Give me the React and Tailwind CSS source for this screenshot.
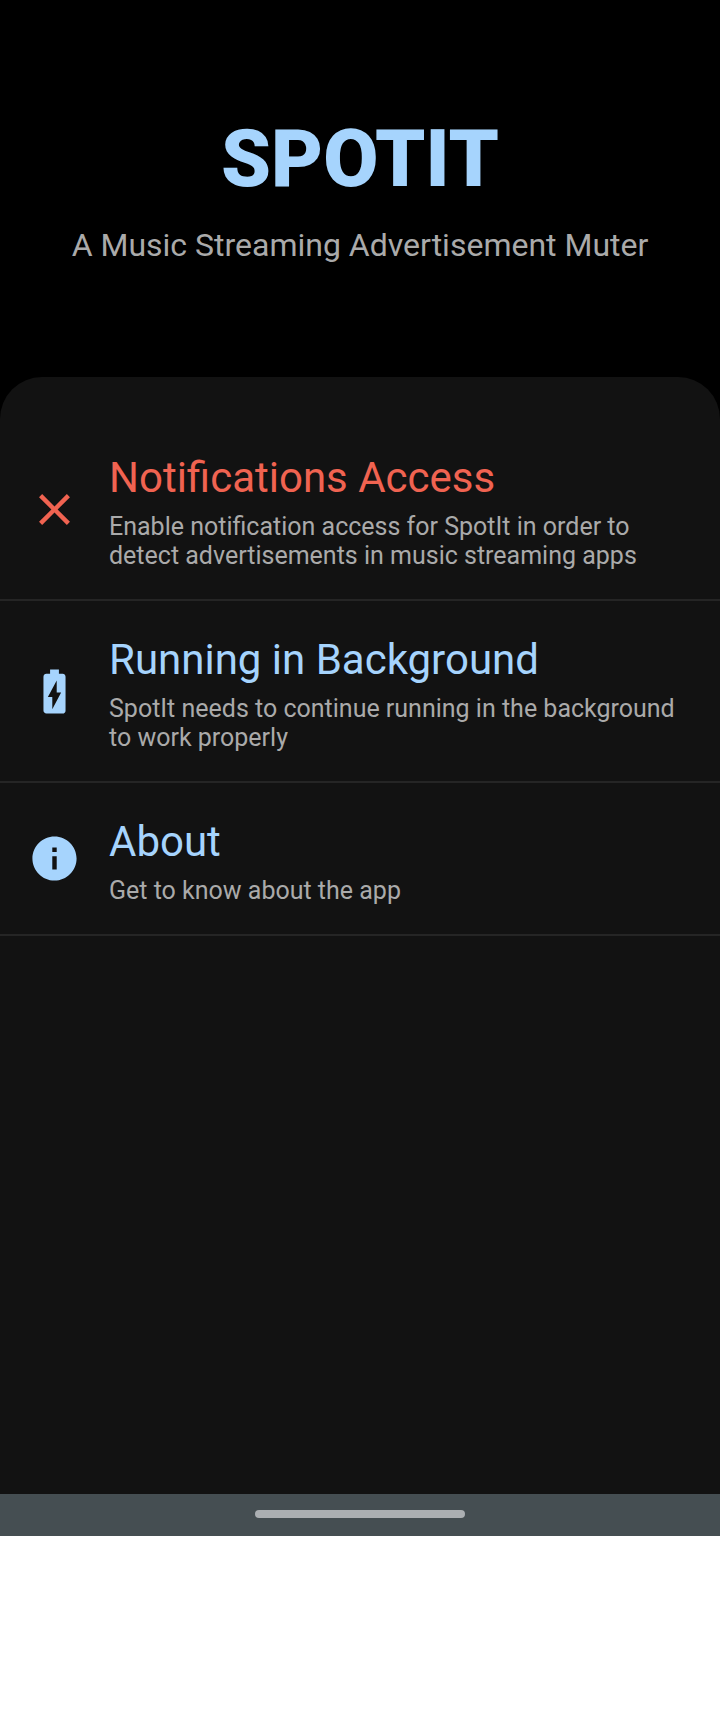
const iconBox = "size-[53px] shrink-0";

function CloseIcon() {
  return (
    <svg viewBox="0 0 24 24" className={iconBox} fill="currentColor" aria-hidden="true">
      <path d="M19 6.41 17.59 5 12 10.59 6.41 5 5 6.41 10.59 12 5 17.59 6.41 19 12 13.41 17.59 19 19 17.59 13.41 12z" />
    </svg>
  );
}

function BatteryIcon() {
  return (
    <svg viewBox="0 0 24 24" className={iconBox} fill="currentColor" aria-hidden="true">
      <path d="M15.67 4H14V2h-4v2H8.33C7.6 4 7 4.6 7 5.33v15.33C7 21.4 7.6 22 8.33 22h7.33c.74 0 1.34-.6 1.34-1.33V5.33C17 4.6 16.4 4 15.67 4zM11 20v-5.5H9L13 7v5.5h2L11 20z" />
    </svg>
  );
}

function InfoIcon() {
  return (
    <svg viewBox="0 0 24 24" className={iconBox} fill="currentColor" aria-hidden="true">
      <path d="M12 2C6.48 2 2 6.48 2 12s4.48 10 10 10 10-4.48 10-10S17.52 2 12 2zm1 15h-2v-6h2v6zm0-8h-2V7h2v2z" />
    </svg>
  );
}

const items = [
  {
    title: "Notifications Access",
    text: "Enable notification access for SpotIt in order to detect advertisements in music streaming apps",
    color: "text-[#f06351]",
    Icon: CloseIcon,
  },
  {
    title: "Running in Background",
    text: "SpotIt needs to continue running in the background to work properly",
    color: "text-[#a6d4fd]",
    Icon: BatteryIcon,
  },
  {
    title: "About",
    text: "Get to know about the app",
    color: "text-[#a6d4fd]",
    Icon: InfoIcon,
  },
];

export default function App() {
  return (
    <div className="min-h-screen bg-white font-[Roboto,sans-serif]">
      <div className="bg-black">
        <header className="flex flex-col items-center pt-28 pb-[113px] text-center">
          <h1 className="text-[80px] leading-[94px] font-black text-[#a6d4fd]">SPOTIT</h1>
          <p className="mt-5 text-[32px] leading-[38px] text-[#aaaaaa]">A Music Streaming Advertisement Muter</p>
        </header>
        <main className="min-h-[1117px] rounded-t-[42px] bg-[#121212] pt-[42px]">
          {items.map(({ title, text, color, Icon }) => (
            <button
              key={title}
              type="button"
              className="flex w-full items-center gap-7 border-b-2 border-[#252525] px-7 py-[29px] text-left"
            >
              <span className={color}><Icon /></span>
              <span className="flex flex-col gap-1">
                <span className={`text-[42px] leading-[60px] ${color}`}>{title}</span>
                <span className="text-[25px] leading-[29px] text-[#aaaaaa]">{text}</span>
              </span>
            </button>
          ))}
        </main>
        <footer className="flex h-[42px] items-center justify-center bg-[#454e52] pb-[2px]">
          <div className="h-2 w-[210px] rounded-full bg-[#abafb2]" />
        </footer>
      </div>
    </div>
  );
}
